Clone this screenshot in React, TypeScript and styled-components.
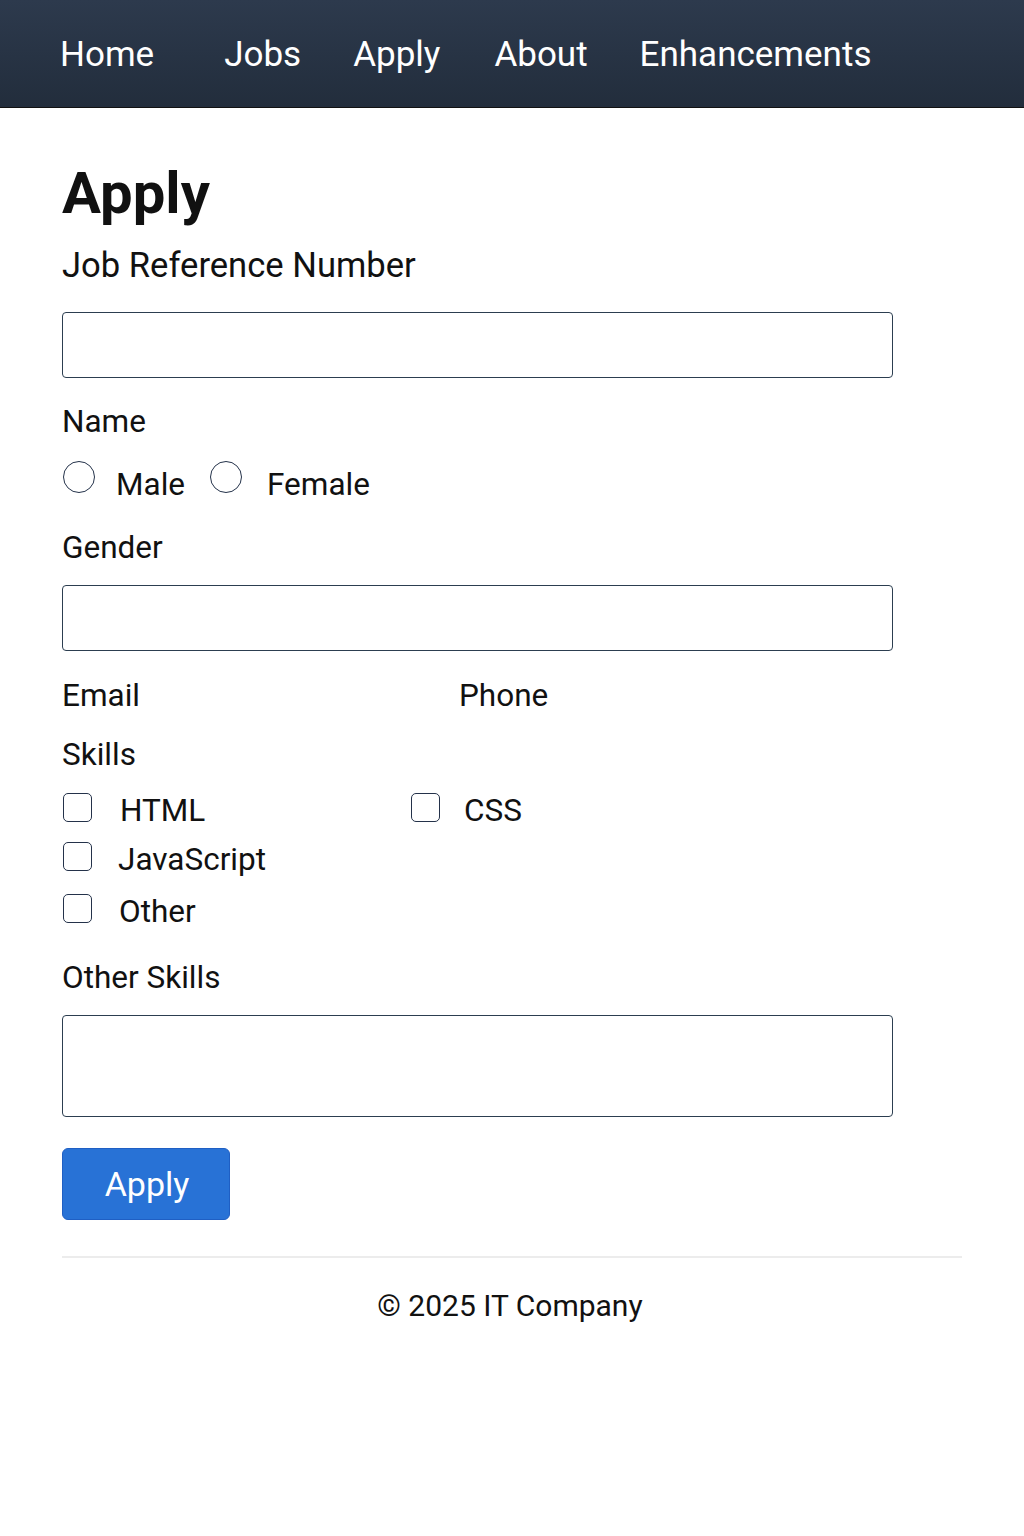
import React from "react";
import styled, { createGlobalStyle } from "styled-components";

const GlobalStyle = createGlobalStyle`
  body {
    margin: 0;
    background: #ffffff;
    font-family: Roboto, "Liberation Sans", Arial, sans-serif;
    color: #111;
  }
`;

const Header = styled.header`
  height: 108px;
  background: linear-gradient(180deg, #2d3a4d 0%, #222d3c 100%);
  border-bottom: 1px solid #111;
  display: flex;
  align-items: center;
  padding-left: 60px;
  padding-top: 2px;
  box-sizing: border-box;
`;

const Nav = styled.nav`
  display: flex;
  align-items: center;
`;

const NavLink = styled.a<{ $gap: number }>`
  color: #fff;
  font-size: 35px;
  text-decoration: none;
  margin-right: ${(p) => p.$gap}px;
`;

const Main = styled.main`
  width: 900px;
  margin-left: 62px;
  padding-top: 50px;
`;

const Title = styled.h1`
  margin: 0;
  font-size: 58px;
  font-weight: 700;
  line-height: 70px;
`;

const Label = styled.div<{ $size?: number }>`
  font-size: ${(p) => p.$size ?? 31.5}px;
  line-height: 40px;
`;

const Field = styled.div<{ $height: number }>`
  width: 831px;
  height: ${(p) => p.$height}px;
  box-sizing: border-box;
  border: 1.5px solid #2c3e50;
  border-radius: 4px;
`;

const Row = styled.div`
  display: flex;
  align-items: center;
`;

const Radio = styled.span`
  width: 32px;
  height: 32px;
  box-sizing: border-box;
  border: 1.5px solid #24324a;
  border-radius: 50%;
  margin-top: -16px;
  margin-left: 1px;
`;

const OptionText = styled.span<{ $left: number; $right?: number }>`
  font-size: 31.5px;
  margin-left: ${(p) => p.$left}px;
  margin-right: ${(p) => p.$right ?? 0}px;
`;

const Box = styled.span`
  width: 29px;
  height: 29px;
  box-sizing: border-box;
  border: 1.5px solid #24324a;
  border-radius: 5px;
  margin-top: -6px;
  margin-left: 1px;
`;

const SkillCell = styled.div`
  display: flex;
  align-items: center;
  width: 348px;
`;

const Button = styled.button`
  width: 168px;
  height: 72px;
  background: #2872d6;
  color: #fff;
  border: 1px solid #1f5fc4;
  border-radius: 6px;
  font-family: Roboto, "Liberation Sans", Arial, sans-serif;
  font-size: 34px;
  padding: 0 0 0 2px;
`;

const Rule = styled.hr`
  border: none;
  border-top: 2px solid #ececec;
  margin: 0;
`;

const Footer = styled.footer`
  text-align: center;
  font-size: 30px;
  padding-top: 30px;
  padding-right: 4px;
`;

export default function App() {
  return (
    <>
      <GlobalStyle />
      <Header>
        <Nav>
          <NavLink $gap={70}>Home</NavLink>
          <NavLink $gap={52}>Jobs</NavLink>
          <NavLink $gap={54}>Apply</NavLink>
          <NavLink $gap={52}>About</NavLink>
          <NavLink $gap={0}>Enhancements</NavLink>
        </Nav>
      </Header>
      <Main>
        <Title>Apply</Title>
        <Label $size={34.6} style={{ marginTop: 17 }}>Job Reference Number</Label>
        <div style={{ height: 27 }} />
        <Field $height={66} />
        <Label style={{ marginTop: 24 }}>Name</Label>
        <Row style={{ marginTop: 24 }}>
          <Radio />
          <OptionText $left={21} $right={24}>Male</OptionText>
          <Radio />
          <OptionText $left={25}>Female</OptionText>
        </Row>
        <Label style={{ marginTop: 25 }}>Gender</Label>
        <Field $height={66} style={{ marginTop: 17 }} />
        <Row style={{ marginTop: 25 }}>
          <Label style={{ width: 397 }}>Email</Label>
          <Label>Phone</Label>
        </Row>
        <Label style={{ marginTop: 19 }}>Skills</Label>
        <Row style={{ marginTop: 17 }}>
          <SkillCell>
            <Box />
            <OptionText $left={28}>HTML</OptionText>
          </SkillCell>
          <SkillCell>
            <Box />
            <OptionText $left={24}>CSS</OptionText>
          </SkillCell>
        </Row>
        <Row style={{ marginTop: 12 }}>
          <Box />
          <OptionText $left={26}>JavaScript</OptionText>
        </Row>
        <Row style={{ marginTop: 15 }}>
          <Box />
          <OptionText $left={27}>Other</OptionText>
        </Row>
        <Label style={{ marginTop: 28 }}>Other Skills</Label>
        <Field $height={102} style={{ marginTop: 17 }} />
        <Button style={{ marginTop: 31 }}>Apply</Button>
        <div style={{ height: 36 }} />
        <Rule />
        <Footer>© 2025 IT Company</Footer>
      </Main>
    </>
  );
}
